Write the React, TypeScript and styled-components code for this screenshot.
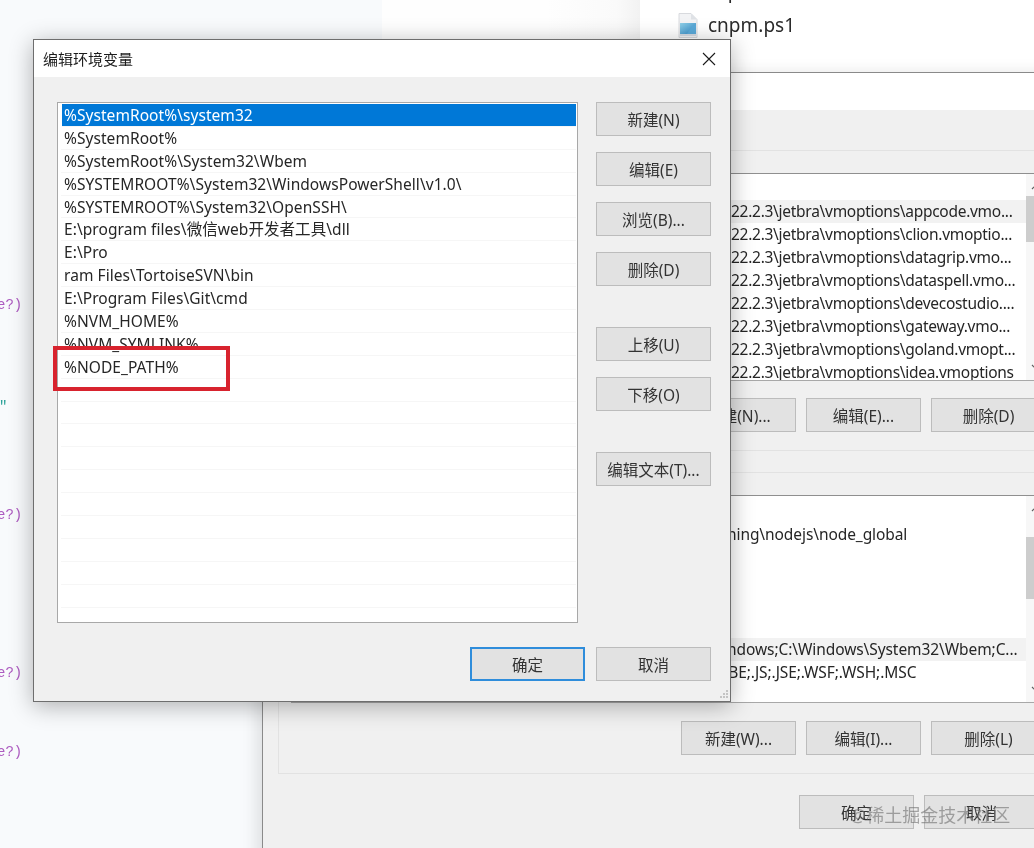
import React from 'react';
import styled, { createGlobalStyle } from 'styled-components';

const GlobalStyle = createGlobalStyle`
  html, body {
    margin: 0;
    padding: 0;
    background: #fff;
  }
`;

const uiFont = `'Noto Sans', 'Noto Sans CJK SC', sans-serif`;

const Desktop = styled.div`
  position: relative;
  width: 1034px;
  height: 848px;
  overflow: hidden;
  display: flex;
  font-family: ${uiFont};
  font-size: 16px;
  color: #222;
  filter: blur(0.45px);
`;

const CodePane = styled.div`
  width: 382px;
  flex: none;
  background: #f8fafc;
  font-family: 'Liberation Mono', monospace;
  font-size: 14px;
  line-height: 20px;
`;

const CodeLine = styled.div<{ $gap: number; $teal?: boolean }>`
  margin-top: ${(p) => p.$gap}px;
  margin-left: ${(p) => (p.$teal ? -1 : -3)}px;
  color: ${(p) => (p.$teal ? '#2aa198' : '#ad5cc0')};
  white-space: pre;
`;

const MiddlePane = styled.div`
  width: 235px;
  flex: none;
  background: linear-gradient(to right, #fefefe, #fefefe 70%, #fafafa);
`;

const ShadowStrip = styled.div`
  width: 23px;
  flex: none;
  background: linear-gradient(to right, #fafafa, #f2f2f2);
`;

const Explorer = styled.div`
  flex: 1;
  background: #fff;
  margin-top: -26px;
  padding-left: 38px;
  font-size: 19px;
`;

const FileRow = styled.div`
  height: 34px;
  display: flex;
  align-items: center;
  gap: 10px;
`;

const FileName = styled.span<{ $noIcon?: boolean }>`
  margin-left: ${(p) => (p.$noIcon ? 29 : 0)}px;
  color: #2b2b2b;
`;

const BackWindow = styled.div`
  position: absolute;
  left: 262px;
  top: 72px;
  width: 810px;
  height: 800px;
  box-sizing: border-box;
  background: #f0f0f0;
  border-left: 1px solid #8a8a8a;
  border-top: 1px solid #8a8a8a;
  box-shadow: -6px 0 14px rgba(0, 0, 0, 0.1);
`;

const BackTitle = styled.div`
  height: 37px;
  background: #fff;
`;

const BackBody = styled.div`
  padding: 40px 16px 0 15px;
`;

const GroupBox = styled.div<{ $spaced?: boolean }>`
  margin-top: ${(p) => (p.$spaced ? 21 : 0)}px;
  border: 1px solid #e2e2e2;
  padding: 22px 9px 18px 12px;
`;

const VarList = styled.div`
  height: 208px;
  margin-right: 2px;
  box-sizing: border-box;
  display: flex;
  background: #fff;
  border-top: 1px solid #8f8f8f;
  border-bottom: 1px solid #a8a8a8;
  overflow: hidden;
`;

const VarRows = styled.div<{ $top: number; $tracking: number }>`
  flex: 1;
  padding-top: ${(p) => p.$top}px;
  min-width: 0;
  letter-spacing: ${(p) => p.$tracking}px;
`;

const VarRow = styled.div<{ $indent: number; $hover?: boolean }>`
  height: 23px;
  line-height: 23px;
  padding-left: ${(p) => p.$indent}px;
  background: ${(p) => (p.$hover ? '#f2f2f2' : 'transparent')};
  white-space: nowrap;
  font-size: 15.5px;
  color: #262626;
`;

const ScrollBar = styled.div`
  width: 18px;
  flex: none;
  position: relative;
  background: #f7f7f7;
  display: flex;
  flex-direction: column;
  align-items: center;
  justify-content: space-between;
  padding: 10px 0;
  box-sizing: border-box;
`;

const ScrollThumb = styled.div<{ $top: number; $height: number }>`
  position: absolute;
  left: 0;
  right: 0;
  top: ${(p) => p.$top}px;
  height: ${(p) => p.$height}px;
  background: #cdcdcd;
`;

const ButtonRow = styled.div<{ $top: number }>`
  display: flex;
  justify-content: flex-end;
  gap: 10px;
  margin-top: ${(p) => p.$top}px;
`;

const FooterRow = styled(ButtonRow)`
  margin-right: 17px;
`;

const WinButton = styled.div<{ $primary?: boolean }>`
  width: 115px;
  height: 34px;
  box-sizing: border-box;
  flex: none;
  display: flex;
  align-items: center;
  justify-content: center;
  background: #e2e2e2;
  border: ${(p) => (p.$primary ? '2px solid #2f8ddb' : '1px solid #bcbcbc')};
  font-size: 15.5px;
  color: #333;
  white-space: nowrap;
`;

const Dialog = styled.div`
  position: absolute;
  left: 33px;
  top: 39px;
  width: 698px;
  height: 663px;
  box-sizing: border-box;
  display: flex;
  flex-direction: column;
  background: #f0f0f0;
  border: 1px solid #6e6e6e;
  box-shadow: 0 4px 22px rgba(0, 0, 0, 0.3);
`;

const DialogTitle = styled.div`
  height: 37px;
  flex: none;
  display: flex;
  align-items: center;
  justify-content: space-between;
  padding: 0 14px 0 9px;
  background: #fff;
  font-size: 15px;
  color: #1c1c1c;
`;

const DialogBody = styled.div`
  display: flex;
  padding: 25px 18px 0 23px;
  gap: 18px;
`;

const PathList = styled.div`
  width: 521px;
  height: 521px;
  flex: none;
  box-sizing: border-box;
  padding: 1px 1px 0 3px;
  background: #fff;
  border: 1px solid #a8a8a8;
  overflow: hidden;
`;

const PathRow = styled.div<{ $selected?: boolean }>`
  height: 22.9px;
  box-sizing: border-box;
  padding-left: ${(p) => (p.$selected ? 2 : 3)}px;
  margin-left: ${(p) => (p.$selected ? 1 : 0)}px;
  line-height: 23px;
  font-size: 15.5px;
  letter-spacing: 0.06px;
  white-space: nowrap;
  color: ${(p) => (p.$selected ? '#fff' : '#262626')};
  background: ${(p) => (p.$selected ? '#0078d7' : 'transparent')};
  border-bottom: 1px solid #f6f6f6;
`;

const ButtonColumn = styled.div`
  display: flex;
  flex-direction: column;
  gap: 16px;
`;

const ButtonSpacer = styled.div`
  height: 9px;
`;

const DialogFooter = styled.div`
  display: flex;
  justify-content: flex-end;
  gap: 11px;
  padding: 24px 19px 0 0;
`;

const ResizeGrip = styled.svg`
  position: absolute;
  right: 1px;
  bottom: 1px;
`;

const RedMark = styled.div`
  position: absolute;
  left: 53px;
  top: 346px;
  width: 177px;
  height: 45px;
  box-sizing: border-box;
  border: 4px solid #d8232e;
`;

const Watermark = styled.div`
  position: absolute;
  left: 850px;
  top: 802px;
  font-size: 18px;
  line-height: 26px;
  color: rgba(110, 110, 110, 0.6);
  white-space: nowrap;
`;

const FileIcon = () => (
  <svg width="20" height="25" viewBox="0 0 20 25">
    <defs>
      <linearGradient id="ps1Picture" x1="0" y1="0" x2="1" y2="1">
        <stop offset="0" stopColor="#8fd0e8" />
        <stop offset="1" stopColor="#2f86c4" />
      </linearGradient>
    </defs>
    <path d="M1 .5h12l6 6v18H1z" fill="#f2f3f5" stroke="#d8dade" />
    <path d="M13 .5v6h6z" fill="#dfe2e6" />
    <rect x="2" y="10" width="16" height="11" fill="url(#ps1Picture)" />
    <path d="M9 21l5-8 4-1v9z" fill="#5aa9d8" />
    <rect x="2" y="21" width="16" height="2" fill="#d5dbe2" />
  </svg>
);

const CloseIcon = () => (
  <svg width="14" height="14" viewBox="0 0 14 14">
    <path d="M1 1l12 12M13 1L1 13" stroke="#1a1a1a" strokeWidth="1.1" fill="none" />
  </svg>
);

const Chevron = ({ up }: { up?: boolean }) => (
  <svg width="9" height="6" viewBox="0 0 9 6">
    <path d={up ? 'M1 5l3.500-3.500L8 5' : 'M1 1l3.500 3.500L8 1'} stroke="#606060" strokeWidth="1.2" fill="none" />
  </svg>
);

const userVars = [
  '22.2.3\\jetbra\\vmoptions\\appcode.vmo...',
  '22.2.3\\jetbra\\vmoptions\\clion.vmoptio...',
  '22.2.3\\jetbra\\vmoptions\\datagrip.vmo...',
  '22.2.3\\jetbra\\vmoptions\\dataspell.vmo...',
  '22.2.3\\jetbra\\vmoptions\\devecostudio....',
  '22.2.3\\jetbra\\vmoptions\\gateway.vmo...',
  '22.2.3\\jetbra\\vmoptions\\goland.vmopt...',
  '22.2.3\\jetbra\\vmoptions\\idea.vmoptions',
];

const paths = [
  '%SystemRoot%\\system32',
  '%SystemRoot%',
  '%SystemRoot%\\System32\\Wbem',
  '%SYSTEMROOT%\\System32\\WindowsPowerShell\\v1.0\\',
  '%SYSTEMROOT%\\System32\\OpenSSH\\',
  'E:\\program files\\微信web开发者工具\\dll',
  'E:\\Pro',
  'ram Files\\TortoiseSVN\\bin',
  'E:\\Program Files\\Git\\cmd',
  '%NVM_HOME%',
  '%NVM_SYMLINK%',
  '%NODE_PATH%',
];

export default function App() {
  return (
    <Desktop>
      <GlobalStyle />
      <CodePane>
        <CodeLine $gap={295}>e?)</CodeLine>
        <CodeLine $gap={82} $teal>"</CodeLine>
        <CodeLine $gap={88}>e?)</CodeLine>
        <CodeLine $gap={138}>e?)</CodeLine>
        <CodeLine $gap={59}>e?)</CodeLine>
      </CodePane>
      <MiddlePane />
      <ShadowStrip />
      <Explorer>
        <FileRow>
          <FileName $noIcon>cnpm</FileName>
        </FileRow>
        <FileRow>
          <FileIcon />
          <FileName>cnpm.ps1</FileName>
        </FileRow>
      </Explorer>

      <BackWindow>
        <BackTitle />
        <BackBody>
          <GroupBox>
            <VarList>
              <VarRows $top={26} $tracking={-0.28}>
                {userVars.map((v, i) => (
                  <VarRow key={v} $indent={440} $hover={i === 0}>{v}</VarRow>
                ))}
              </VarRows>
              <ScrollBar>
                <Chevron up />
                <ScrollThumb $top={22} $height={46} />
                <Chevron />
              </ScrollBar>
            </VarList>
            <ButtonRow $top={17}>
              <WinButton>新建(N)...</WinButton>
              <WinButton>编辑(E)...</WinButton>
              <WinButton>删除(D)</WinButton>
            </ButtonRow>
          </GroupBox>
          <GroupBox $spaced>
            <VarList>
              <VarRows $top={27} $tracking={-0.08}>
                <VarRow $indent={436}>ning\nodejs\node_global</VarRow>
                <VarRow $indent={0} />
                <VarRow $indent={0} />
                <VarRow $indent={0} />
                <VarRow $indent={0} />
                <VarRow $indent={436} $hover>ndows;C:\Windows\System32\Wbem;C...</VarRow>
                <VarRow $indent={428}>VBE;.JS;.JSE;.WSF;.WSH;.MSC</VarRow>
              </VarRows>
              <ScrollBar>
                <Chevron up />
                <ScrollThumb $top={41} $height={62} />
                <Chevron />
              </ScrollBar>
            </VarList>
            <ButtonRow $top={18}>
              <WinButton>新建(W)...</WinButton>
              <WinButton>编辑(I)...</WinButton>
              <WinButton>删除(L)</WinButton>
            </ButtonRow>
          </GroupBox>
          <FooterRow $top={21}>
            <WinButton>确定</WinButton>
            <WinButton>取消</WinButton>
          </FooterRow>
        </BackBody>
      </BackWindow>

      <Dialog>
        <DialogTitle>
          <span>编辑环境变量</span>
          <CloseIcon />
        </DialogTitle>
        <DialogBody>
          <PathList>
            {paths.map((p, i) => (
              <PathRow key={p} $selected={i === 0}>{p}</PathRow>
            ))}
            {Array.from({ length: 11 }, (_, i) => (
              <PathRow key={i} />
            ))}
          </PathList>
          <ButtonColumn>
            <WinButton>新建(N)</WinButton>
            <WinButton>编辑(E)</WinButton>
            <WinButton>浏览(B)...</WinButton>
            <WinButton>删除(D)</WinButton>
            <ButtonSpacer />
            <WinButton>上移(U)</WinButton>
            <WinButton>下移(O)</WinButton>
            <ButtonSpacer />
            <WinButton>编辑文本(T)...</WinButton>
          </ButtonColumn>
        </DialogBody>
        <DialogFooter>
          <WinButton $primary>确定</WinButton>
          <WinButton>取消</WinButton>
        </DialogFooter>
        <ResizeGrip width="12" height="12" viewBox="0 0 12 12">
          <path d="M9 2h2v2H9zM6 5h2v2H6zM9 5h2v2H9zM3 8h2v2H3zM6 8h2v2H6zM9 8h2v2H9z" fill="#c4c4c4" />
        </ResizeGrip>
      </Dialog>

      <RedMark />
      <Watermark>@稀土掘金技术社区</Watermark>
    </Desktop>
  );
}
